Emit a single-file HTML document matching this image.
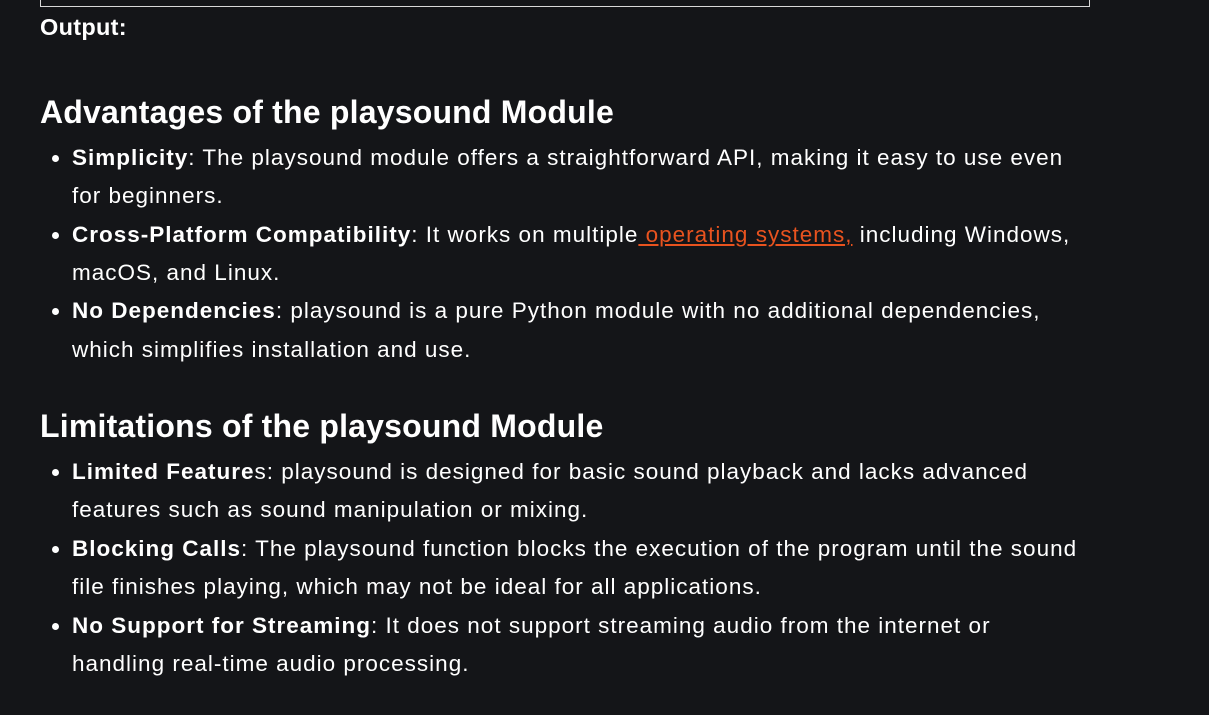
<!DOCTYPE html>
<html><head><style>
body{margin:0;width:1209px;height:715px;background:#141518;color:#fff;font-family:"Liberation Sans",sans-serif;position:relative;overflow:hidden}
.box{position:absolute;left:40px;top:-2px;width:1048px;height:8px;border:1px solid #d8d8d8;border-top:none}
.l{position:absolute;left:72px;font-size:22.5px;white-space:nowrap;line-height:30px;letter-spacing:1px}
.l.b::before{content:"";position:absolute;left:-20px;top:12px;width:7px;height:7px;border-radius:50%;background:#fff}
h2{position:absolute;left:40px;margin:0;font-size:32px;font-weight:bold;white-space:nowrap;line-height:40px;letter-spacing:0.2px}
.o{position:absolute;left:40px;top:12px;font-size:23.5px;font-weight:bold;line-height:30px;letter-spacing:0.3px}
a{color:#e8531f;text-decoration:underline}
</style></head><body>
<div class="box"></div>
<div class="o">Output:</div>
<h2 style="top:92px">Advantages of the playsound Module</h2>
<div class="l b" style="top:143px"><b>Simplicity</b>: The playsound module offers a straightforward API, making it easy to use even</div>
<div class="l" style="top:181px">for beginners.</div>
<div class="l b" style="top:220px"><b>Cross-Platform Compatibility</b>: It works on multiple<a> operating systems,</a> including Windows,</div>
<div class="l" style="top:258px">macOS, and Linux.</div>
<div class="l b" style="top:296px"><b>No Dependencies</b>: playsound is a pure Python module with no additional dependencies,</div>
<div class="l" style="top:335px">which simplifies installation and use.</div>
<h2 style="top:406px">Limitations of the playsound Module</h2>
<div class="l b" style="top:457px"><b>Limited Feature</b>s: playsound is designed for basic sound playback and lacks advanced</div>
<div class="l" style="top:495px">features such as sound manipulation or mixing.</div>
<div class="l b" style="top:534px"><b>Blocking Calls</b>: The playsound function blocks the execution of the program until the sound</div>
<div class="l" style="top:572px">file finishes playing, which may not be ideal for all applications.</div>
<div class="l b" style="top:611px"><b>No Support for Streaming</b>: It does not support streaming audio from the internet or</div>
<div class="l" style="top:649px">handling real-time audio processing.</div>
</body></html>
